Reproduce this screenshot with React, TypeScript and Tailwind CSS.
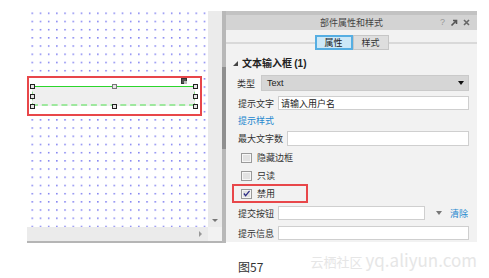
import React from "react"

const cjk = { fontFamily: '"Noto Sans CJK SC", "Liberation Sans", sans-serif' }

function Handle({ x, y, grey }: { x: number; y: number; grey?: boolean }) {
  return (
    <div
      className={`absolute w-[5px] h-[5px] bg-[#e6e6e6] border ${grey ? "border-[#777]" : "border-[#222]"}`}
      style={{ left: x - 2, top: y - 2 }}
    />
  )
}

function Checkbox({ checked }: { checked?: boolean }) {
  return (
    <div className="w-[11px] h-[10px] border border-[#9a9a9a] bg-[#f6f6f6] flex items-center justify-center shrink-0">
      <div className="w-[7px] h-[6px] bg-[#e2e2e2] flex items-center justify-center">
        {checked && (
          <svg width="8" height="7" viewBox="0 0 8 7">
            <path d="M1 3.5 L3 6 L7.5 0.5" stroke="#2b2b86" strokeWidth="1.4" fill="none" />
          </svg>
        )}
      </div>
    </div>
  )
}

export default function App() {
  return (
    <div className="w-[489px] h-[278px] bg-white relative overflow-hidden" style={cjk}>
      <div className="flex pt-[11px] pl-[27px]">
        {/* Left canvas panel */}
        <div className="w-[195px] h-[232px] flex flex-col">
          <div className="flex flex-1">
            <div className="relative flex-1 bg-white overflow-hidden">
              <svg className="absolute inset-0" width="181" height="216">
                <defs>
                  <pattern id="dots" x="4.5" y="1.5" width="8.2" height="8.2" patternUnits="userSpaceOnUse">
                    <rect x="0" y="0" width="1.5" height="1.5" fill="#7a7af0" />
                  </pattern>
                </defs>
                <rect width="181" height="216" fill="url(#dots)" />
              </svg>
              {/* selected text input widget */}
              <div className="absolute left-0 top-[65px] w-[175px] h-[40px] border-2 border-[#e8474a] bg-white" />
              <div className="absolute left-[5px] top-[75px] w-[163px] h-[20px] bg-[#efefef] border-t border-t-[#2bd62b] border-b-2 border-b-[#9ee89e] border-dashed border-x border-x-[#8ee08e]" />
              <div className="absolute left-[5px] top-[75px] w-[163px] h-[1px] bg-[#2bd62b]" />
              <div className="absolute left-[154px] top-[67px] w-[6px] h-[6px] bg-[#555] border border-[#333]">
                <div className="w-[3px] h-[3px] bg-[#bbb] ml-[2px] mt-[2px]" />
              </div>
              <Handle x={5} y={75} />
              <Handle x={87} y={75} grey />
              <Handle x={168} y={75} />
              <Handle x={5} y={85} />
              <Handle x={168} y={85} />
              <Handle x={5} y={95} />
              <Handle x={87} y={95} />
              <Handle x={168} y={95} />
            </div>
            <div className="w-[14px] bg-[#ebebeb] flex flex-col justify-end items-center pb-[5px]">
              <div className="w-0 h-0 border-l-[3px] border-r-[3px] border-t-[3px] border-l-transparent border-r-transparent border-t-[#777]" />
            </div>
          </div>
          <div className="h-[14px] flex">
            <div className="flex-1 bg-[#ebebeb] flex items-center justify-end pr-[6px]">
              <div className="w-0 h-0 border-t-[3px] border-b-[3px] border-l-[3px] border-t-transparent border-b-transparent border-l-[#999]" />
            </div>
            <div className="w-[14px] bg-[#f2f2f2]" />
          </div>
          <div className="h-[2px] bg-[#b5b5b5]" />
        </div>

        {/* splitter */}
        <div className="w-[4px] h-[232px] bg-[#b8b8b8] flex flex-col">
          <div className="h-[56px]" />
          <div className="h-[82px] bg-[#8f8f8f]" />
        </div>

        {/* Right properties panel */}
        <div className="w-[251px] h-[231px] flex flex-col bg-[#f2f2f2]">
          <div className="h-[4px] bg-[#c2c2c2]" />
          <div className="h-[15px] bg-[#d3d3d3] flex items-center relative">
            <div className="flex-1 text-center text-[9px] leading-none text-[#444]">部件属性和样式</div>
            <div className="absolute right-[7px] top-0 h-full flex items-center gap-[5px]">
              <span className="text-[9px] leading-none text-[#999]" style={{ fontFamily: '"Liberation Sans", sans-serif' }}>?</span>
              <svg width="8" height="8" viewBox="0 0 8 8">
                <path d="M1.5 6.5 L6 2 M3 1.5 H6.5 V5" stroke="#555" strokeWidth="1.6" fill="none" />
              </svg>
              <svg width="7" height="7" viewBox="0 0 7 7">
                <path d="M1 1 L6 6 M6 1 L1 6" stroke="#666" strokeWidth="1.6" />
              </svg>
            </div>
          </div>

          {/* tabs */}
          <div className="mt-[5px] h-[15px] flex items-center">
            <div className="flex-1 h-[2px] bg-[#d9d9d9]" />
            <div className="w-[38px] h-[15px] bg-[#cde8f7] border-2 border-[#56aee2] flex items-center justify-center text-[9px] leading-none text-[#222]">属性</div>
            <div className="w-[36px] h-[15px] bg-[#dedede] border border-[#c6c6c6] flex items-center justify-center text-[9px] leading-none text-[#333]">样式</div>
            <div className="flex-1 h-[2px] bg-[#d9d9d9]" />
          </div>

          {/* section title */}
          <div className="mt-[6px] h-[14px] flex items-center pl-[7px] gap-[4px]">
            <div className="w-0 h-0 border-b-[5px] border-l-[5px] border-b-[#444] border-l-transparent" />
            <span className="text-[10px] leading-none font-bold text-[#222]">
              文本输入框 <span style={{ fontFamily: '"Liberation Sans", sans-serif' }}>(1)</span>
            </span>
          </div>

          {/* type */}
          <div className="mt-[5px] h-[16px] flex items-center pl-[11px] pr-[8px]">
            <span className="w-[24px] text-[9px] leading-none text-[#333] shrink-0">类型</span>
            <div className="flex-1 h-[16px] bg-[#d6d6d6] border border-[#cacaca] flex items-center justify-between pl-[5px] pr-[4px]">
              <span className="text-[9px] leading-none text-[#222]" style={{ fontFamily: '"Liberation Sans", sans-serif' }}>Text</span>
              <div className="w-0 h-0 border-l-[3px] border-r-[3px] border-t-[4px] border-l-transparent border-r-transparent border-t-[#111]" />
            </div>
          </div>

          {/* hint text */}
          <div className="mt-[5px] h-[14px] flex items-center pl-[12px] pr-[8px]">
            <span className="w-[40px] text-[9px] leading-none text-[#333] shrink-0">提示文字</span>
            <div className="flex-1 h-[14px] bg-white border border-[#cfcfcf] flex items-center pl-[2px]">
              <span className="text-[9px] leading-none text-[#222]">请输入用户名</span>
            </div>
          </div>

          {/* hint style link */}
          <div className="mt-[3px] h-[14px] flex items-center pl-[12px]">
            <span className="text-[9px] leading-none text-[#2487cf]">提示样式</span>
          </div>

          {/* max length */}
          <div className="mt-[4px] h-[15px] flex items-center pl-[12px] pr-[8px]">
            <span className="w-[49px] text-[9px] leading-none text-[#333] shrink-0">最大文字数</span>
            <div className="flex-1 h-[15px] bg-white border border-[#cfcfcf]" />
          </div>

          {/* checkboxes */}
          <div className="mt-[5px] h-[13px] flex items-center pl-[15px] gap-[5px]">
            <Checkbox />
            <span className="text-[9px] leading-none text-[#333]">隐藏边框</span>
          </div>
          <div className="mt-[5px] h-[13px] flex items-center pl-[15px] gap-[5px]">
            <Checkbox />
            <span className="text-[9px] leading-none text-[#333]">只读</span>
          </div>
          <div className="mt-[2px] ml-[6px] w-[76px] h-[19px] border-2 border-[#e8474a] flex items-center pl-[7px] gap-[5px]">
            <Checkbox checked />
            <span className="text-[9px] leading-none text-[#333]">禁用</span>
          </div>

          {/* submit button */}
          <div className="mt-[3px] h-[14px] flex items-center pl-[12px] pr-[9px]">
            <span className="w-[40px] text-[9px] leading-none text-[#333] shrink-0">提交按钮</span>
            <div className="flex-1 h-[14px] bg-white border border-[#cfcfcf]" />
            <div className="ml-[11px] w-0 h-0 border-l-[3px] border-r-[3px] border-t-[4px] border-l-transparent border-r-transparent border-t-[#777]" />
            <span className="ml-[8px] text-[9px] leading-none text-[#2487cf]">清除</span>
          </div>

          {/* tooltip */}
          <div className="mt-[6px] h-[14px] flex items-center pl-[12px] pr-[8px]">
            <span className="w-[40px] text-[9px] leading-none text-[#333] shrink-0">提示信息</span>
            <div className="flex-1 h-[14px] bg-white border border-[#cfcfcf]" />
          </div>
        </div>
      </div>

      {/* caption and watermark */}
      <div className="flex items-start pl-[238px] pr-[12px] mt-[8px]">
        <span className="mt-[10px] text-[12px] leading-none text-[#333]">图57</span>
        <span className="ml-auto text-[17px] leading-none text-[#e6e6e6]" style={{ fontFamily: '"Noto Sans CJK SC", "Liberation Sans", sans-serif' }}>
          <span className="text-[13px]">云栖社区 </span>yq.aliyun.com
        </span>
      </div>
    </div>
  )
}
